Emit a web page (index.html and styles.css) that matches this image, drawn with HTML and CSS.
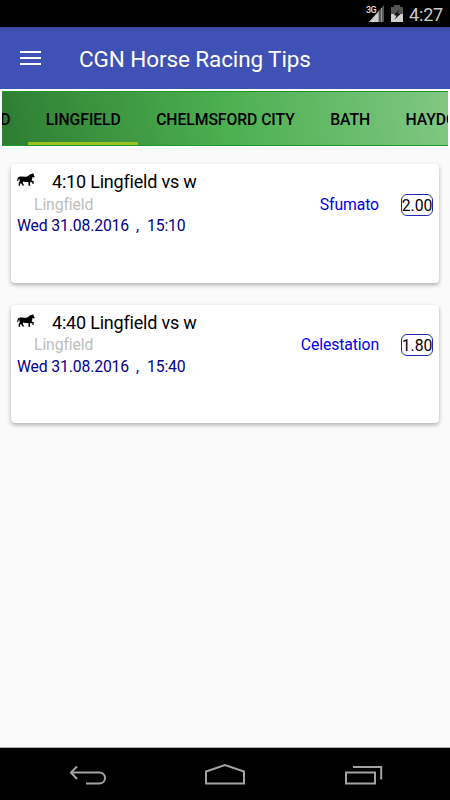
FILE: index.html
```
<!DOCTYPE html>
<html lang="en">
<head>
    <meta charset="UTF-8">
    <meta name="viewport" content="width=device-width, initial-scale=1.0">
    <title>CGN Horse Racing Tips</title>
    <link rel="stylesheet" href="styles.css">
</head>
<body>
    <!-- horse icon used by every card -->
    <svg width="0" height="0" class="symbols">
        <symbol id="horse" viewBox="0 0 18 14">
            <path d="M0.2 7.5 C0.5 5 1 3.8 2.6 3.7 C5 3.3 7 4.2 10.2 3.4 C11.8 2.6 12.7 1.1 14.5 0.9 L16.4 0.3 L16.6 1.6 L17.7 3.8 L17 4.6 L15.4 3.9 C15.1 5.6 15.2 6.6 14.4 7.6 L16.9 8.3 L16.5 11 L15.3 11 L15.6 9.4 L13.2 9.1 L13 11.8 L13.4 12.8 L11.5 12.8 L11.4 8.9 C9.5 9.1 7.5 8.8 6.2 8.4 L5.7 9.5 L7.2 12.4 L5.6 12.6 L4 9.9 L3 11 L3.2 12.8 L1.6 12.8 L1.6 10.4 L2.7 8.5 L2.3 5.6 C1.6 6.2 1.5 7.4 0.8 8.5 Z"/>
        </symbol>
    </svg>

    <div class="statusbar">
        <svg class="signal" width="19" height="18" viewBox="0 0 19 18">
            <path d="M18 1 V18 H3 Z" fill="#555"/>
            <path d="M12 8 V18 H3 Z" fill="#ccc"/>
            <path d="M12.5 7 V18 M15.5 4 V18" stroke="#999" stroke-width="1"/>
            <text x="0" y="8.5">3G</text>
        </svg>
        <svg class="battery" width="12" height="18" viewBox="0 0 12 18">
            <path d="M0 2 H3 V0 H9 V2 H12 V17 H0 Z" fill="#555"/>
            <path d="M0 9 H12 V17 H0 Z" fill="#d0d0d0"/>
            <path d="M8.5 4.5 L2.8 10 L5.5 10.8 L3.5 14.5 L9.5 9 L6.5 8.2 Z" fill="#111"/>
        </svg>
        <span class="clock">4:27</span>
    </div>

    <header>
        <div class="menu">
            <span></span>
            <span></span>
            <span></span>
        </div>
        <h1>CGN Horse Racing Tips</h1>
    </header>

    <div class="tabs">
        <div class="tab">D</div>
        <div class="tab active">LINGFIELD</div>
        <div class="tab">CHELMSFORD CITY</div>
        <div class="tab">BATH</div>
        <div class="tab">HAYDOCK</div>
    </div>

    <main>
        <div class="card">
            <div class="card-title">
                <svg class="horse"><use href="#horse"/></svg>
                <h2>4:10 Lingfield vs w</h2>
            </div>
            <div class="card-tip">
                <span class="place">Lingfield</span>
                <span class="tip">Sfumato</span>
                <span class="odds">2.00</span>
            </div>
            <div class="card-date"><span class="day">Wed 31.08.2016</span><span class="comma">,</span><span>15:10</span></div>
        </div>
        <div class="card">
            <div class="card-title">
                <svg class="horse"><use href="#horse"/></svg>
                <h2>4:40 Lingfield vs w</h2>
            </div>
            <div class="card-tip">
                <span class="place">Lingfield</span>
                <span class="tip">Celestation</span>
                <span class="odds">1.80</span>
            </div>
            <div class="card-date"><span class="day">Wed 31.08.2016</span><span class="comma">,</span><span>15:40</span></div>
        </div>
    </main>

    <footer>
        <svg width="450" height="52" viewBox="0 0 450 52" fill="none" stroke="#a3a3a3" stroke-width="2">
            <path d="M71 24.5 H99 C107 24.5 107 35.5 99 35.5 H86"/>
            <path d="M77 18.5 L71 24.5 L77 31"/>
            <path d="M206 35.5 V23.5 L225 17 L244 23.5 V35.5 Z"/>
            <path d="M346 24.5 H375 V35.5 H346 Z"/>
            <path d="M353 19 H381.2 V31.5"/>
        </svg>
    </footer>
</body>
</html>
```
FILE: styles.css
```
* {
    box-sizing: border-box;
}

body {
    margin: 0;
    width: 450px;
    height: 800px;
    display: flex;
    flex-direction: column;
    overflow: hidden;
    font-family: Roboto, sans-serif;
    background-color: #fafafa;
}

.symbols {
    position: absolute;
}

.statusbar {
    height: 27px;
    flex: none;
    display: flex;
    justify-content: flex-end;
    padding: 4px 7px 0 0;
    background-color: #000;
    color: #ccc;
}

.signal {
    overflow: visible;
    margin-right: -1px;
}

.signal text {
    font-size: 9px;
    font-weight: 500;
    letter-spacing: -0.5px;
    fill: #ddd;
    stroke: #000;
    stroke-width: 1.5px;
    paint-order: stroke;
}

.battery {
    margin: 1px 6px 0 7px;
}

.clock {
    font-size: 18px;
    line-height: 21px;
    letter-spacing: -0.2px;
}

header {
    height: 62px;
    flex: none;
    display: flex;
    align-items: center;
    padding-left: 20px;
    background: linear-gradient(#39499c, #3f51b5 5px);
    color: #fff;
}

.menu {
    width: 21px;
    display: flex;
    flex-direction: column;
    gap: 4px;
}

.menu span {
    height: 2px;
    background-color: #fff;
}

h1 {
    margin: 2px 0 0 38px;
    font-size: 22.5px;
    font-weight: 400;
    line-height: 28px;
    letter-spacing: -0.1px;
}

.tabs {
    width: 446px;
    height: 55px;
    flex: none;
    display: flex;
    justify-content: flex-start;
    margin: 2px;
    overflow: hidden;
    background: linear-gradient(80deg, #2e7d32, #4caf50 50%, #81c784);
    border-top: 1px solid #20982a;
    border-bottom: 1px solid #20982a;
    box-shadow: 0 0 0 2px #fff;
}

.tab {
    flex: none;
    padding: 0 17.7px;
    font-size: 15.75px;
    font-weight: 500;
    line-height: 56px;
    letter-spacing: -0.07px;
    color: #000;
}

/* scrolled almost out of view */
.tab:first-child {
    width: 26px;
    padding: 0 17.5px 0 0;
    display: flex;
    justify-content: flex-end;
}

.active {
    border-bottom: 3px solid #9bc21e;
}

main {
    flex: 1;
    display: flex;
    flex-direction: column;
    gap: 22px;
    padding: 16px 11px;
}

.card {
    height: 118.5px;
    padding: 7px 6px;
    background-color: #fff;
    border-radius: 4px;
    box-shadow: 0 2px 4px rgba(0, 0, 0, 0.3);
}

.card-title {
    display: flex;
    height: 23px;
}

.horse {
    width: 18px;
    height: 14px;
    margin-top: 2px;
}

h2 {
    margin: 0 0 0 17px;
    font-size: 18px;
    font-weight: 400;
    line-height: 22px;
    letter-spacing: -0.2px;
}

.card-tip {
    display: flex;
    align-items: center;
    height: 22px;
    font-size: 15.75px;
    line-height: 20px;
    letter-spacing: -0.1px;
}

.place {
    flex: 1;
    padding-left: 17px;
    margin-top: -1px;
    color: #bdbdbd;
}

.tip {
    margin-top: -1px;
    color: #0000f0;
}

.odds {
    width: 32px;
    height: 22px;
    margin: -1px 0 0 22px;
    border: 1px solid #1c28b0;
    border-radius: 6px;
    line-height: 21px;
    display: flex;
    justify-content: center;
}

.card-date {
    display: flex;
    font-size: 15.75px;
    line-height: 20px;
    letter-spacing: -0.14px;
    color: #00008b;
}

.comma {
    margin: 0 8px 0 7px;
}

footer {
    height: 53px;
    flex: none;
    border-top: 1px solid #aaa;
    background-color: #000;
}
```
